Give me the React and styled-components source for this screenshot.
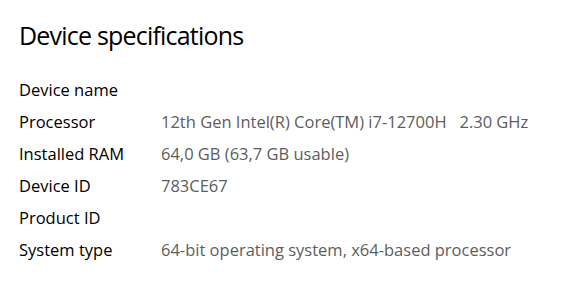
import styled, { createGlobalStyle } from "styled-components"

const GlobalStyle = createGlobalStyle`
  body {
    margin: 0;
    background: #ffffff;
    font-family: "Open Sans", "Noto Sans", sans-serif;
  }
`

const specs = [
  { label: "Device name", value: "" },
  { label: "Processor", value: "12th Gen Intel(R) Core(TM) i7-12700H\u00a0\u00a0\u00a02.30 GHz" },
  { label: "Installed RAM", value: "64,0 GB (63,7 GB usable)" },
  { label: "Device ID", value: "783CE67" },
  { label: "Product ID", value: "" },
  { label: "System type", value: "64-bit operating system, x64-based processor" },
]

export default function App() {
  return (
    <>
      <GlobalStyle />
      <Panel>
        <Title>Device specifications</Title>
        <SpecList>
          {specs.map((s) => (
            <Row key={s.label}>
              <Label>{s.label}</Label>
              <Value>{s.value}</Value>
            </Row>
          ))}
        </SpecList>
      </Panel>
    </>
  )
}

const Panel = styled.div`
  width: 583px;
  height: 306px;
  padding: 17px 19px 0;
  box-sizing: border-box;
`

const Title = styled.h1`
  margin: 0;
  font-size: 25px;
  font-weight: 400;
  line-height: 36px;
  color: #000;
  letter-spacing: -0.8px;
`

const SpecList = styled.div`
  margin-top: 20px;
  display: flex;
  flex-direction: column;
`

const Row = styled.div`
  display: grid;
  grid-template-columns: 142px 1fr;
  height: 32px;
  align-items: center;
  font-size: 16.5px;
`

const Label = styled.span`
  color: #000;
`

const Value = styled.span`
  color: #5d5d5d;
  white-space: pre;
`
